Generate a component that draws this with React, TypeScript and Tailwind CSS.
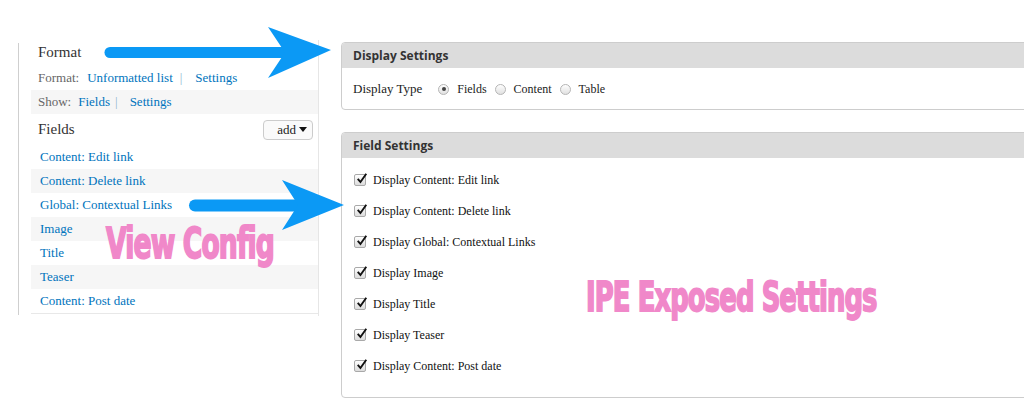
import React from 'react';

const serif = "font-['Liberation_Serif','Times_New_Roman',serif]";

const Check = () => (
  <span className="relative inline-block w-[12px] h-[12px] rounded-[2px] border border-[#a9a9a9] bg-gradient-to-b from-white to-[#dcdcdc] shrink-0">
    <svg viewBox="0 0 14 14" className="absolute left-[1px] top-[-3px] w-[12px] h-[13px]">
      <path d="M2 7.5 L5.2 11 L12 1.5" fill="none" stroke="#111" strokeWidth="2.2" />
    </svg>
  </span>
);

const Radio = ({ on }: { on?: boolean }) => (
  <span className="inline-flex items-center justify-center w-[11px] h-[11px] rounded-full border border-[#b5b5b5] bg-gradient-to-b from-white to-[#e0e0e0] shrink-0">
    {on && <span className="w-[4px] h-[4px] rounded-full bg-[#444]" />}
  </span>
);

const App = () => {
  const rows = [
    'Content: Edit link',
    'Content: Delete link',
    'Global: Contextual Links',
    'Image',
    'Title',
    'Teaser',
    'Content: Post date',
  ];
  const fields = [
    'Display Content: Edit link',
    'Display Content: Delete link',
    'Display Global: Contextual Links',
    'Display Image',
    'Display Title',
    'Display Teaser',
    'Display Content: Post date',
  ];

  return (
    <div className="relative w-[1024px] h-[418px] bg-white overflow-hidden flex">
      {/* View config column */}
      <div className="flex pl-[18px] pt-[40px] w-[341px] shrink-0">
        <div className="w-px h-[272px] mt-[3px] bg-[#cfcfcf]" />
        <div className={`ml-[12px] w-[288px] h-[276px] border-r border-[#e6e6e6] ${serif}`}>
          <div className="h-[25px] flex items-center pl-[7px] text-[15px] text-[#333]">Format</div>
          <div className="h-[25px] flex items-center pl-[7px] text-[13px] text-[#666]">
            Format:<span className="ml-[8px] text-[#0074bd]">Unformatted list</span>
            <span className="ml-[7px] text-[#8fb3d0]">|</span>
            <span className="ml-[13px] text-[#0074bd]">Settings</span>
          </div>
          <div className="h-[24px] flex items-center pl-[7px] text-[13px] text-[#666] bg-[#f6f6f6]">
            Show:<span className="ml-[7px] text-[#0074bd]">Fields</span>
            <span className="ml-[5px] text-[#8fb3d0]">|</span>
            <span className="ml-[12px] text-[#0074bd]">Settings</span>
          </div>
          <div className="h-[31px] flex items-center justify-between pl-[7px] pr-[5px] text-[15px] text-[#333]">
            <span>Fields</span>
            <span className="w-[50px] h-[20px] rounded-[4px] border border-[#ccc] bg-[#fafafa] flex items-center justify-end pr-[5px] gap-[3px] text-[13px] text-[#222]">
              add
              <svg viewBox="0 0 8 5" className="w-[8px] h-[5px]">
                <path d="M0 0 H8 L4 5 Z" fill="#111" />
              </svg>
            </span>
          </div>
          <div className="border-b border-[#e8e8e8]">
            {rows.map((r, i) => (
              <div
                key={r}
                className={`h-[24px] flex items-center pl-[9px] text-[13px] text-[#0074bd] ${i % 2 === 1 ? 'bg-[#f6f6f6]' : 'bg-white'}`}
              >
                {r}
              </div>
            ))}
          </div>
        </div>
      </div>

      {/* IPE settings column */}
      <div className="flex-1 pt-[42px] flex flex-col gap-[22px] min-w-0">
        <div className="w-[700px] h-[68px] rounded-[4px] border border-[#cdcdcd] overflow-hidden">
          <div className="h-[25px] bg-[#dcdcdc] flex items-center pl-[11px] text-[12px] font-bold text-[#333] font-['Open_Sans',sans-serif]">
            Display Settings
          </div>
          <div className={`h-[42px] flex items-center pl-[11px] text-[13px] text-[#222] ${serif}`}>
            <span>Display Type</span>
            <span className="ml-[16px] flex items-center gap-[8px] text-[12px]">
              <Radio on />
              <span>Fields</span>
              <Radio />
              <span>Content</span>
              <Radio />
              <span>Table</span>
            </span>
          </div>
        </div>

        <div className="w-[700px] h-[266px] rounded-[4px] border border-[#cdcdcd] overflow-hidden">
          <div className="h-[25px] bg-[#dcdcdc] flex items-center pl-[11px] text-[12px] font-bold text-[#333] font-['Open_Sans',sans-serif]">
            Field Settings
          </div>
          <div className={`pt-[6px] pl-[12px] flex flex-col text-[12px] text-[#111] ${serif}`}>
            {fields.map((f) => (
              <div key={f} className="h-[31px] flex items-center gap-[7px]">
                <Check />
                <span>{f}</span>
              </div>
            ))}
          </div>
        </div>
      </div>

      {/* Annotations */}
      <svg className="absolute left-0 top-0 w-[1024px] h-[418px] pointer-events-none" viewBox="0 0 1024 418">
        <line x1="110" y1="52.5" x2="290" y2="52.5" stroke="#0b99f5" strokeWidth="11" strokeLinecap="round" />
        <path d="M268 27 L331 50 L268 78 L285 52.5 Z" fill="#0b99f5" />
        <line x1="195" y1="205.5" x2="305" y2="205.5" stroke="#0b99f5" strokeWidth="12" strokeLinecap="round" />
        <path d="M282 180 L344 205 L282 230 L298 205 Z" fill="#0b99f5" />
      </svg>
      <div className="absolute left-[106px] top-[222px] text-[34px] leading-none font-bold tracking-[-1px] text-[#f088c9] [-webkit-text-stroke:1.5px_#f088c9] font-['Liberation_Sans_Narrow','DejaVu_Sans_Condensed',sans-serif] origin-top-left scale-x-[0.87] scale-y-[1.25]">
        View Config
      </div>
      <div className="absolute left-[586px] top-[276px] text-[33px] leading-none font-bold tracking-[-1px] text-[#f088c9] [-webkit-text-stroke:1.5px_#f088c9] font-['Liberation_Sans_Narrow','DejaVu_Sans_Condensed',sans-serif] origin-top-left scale-x-[0.87] scale-y-[1.25]">
        IPE Exposed Settings
      </div>
    </div>
  );
};

export default App;
